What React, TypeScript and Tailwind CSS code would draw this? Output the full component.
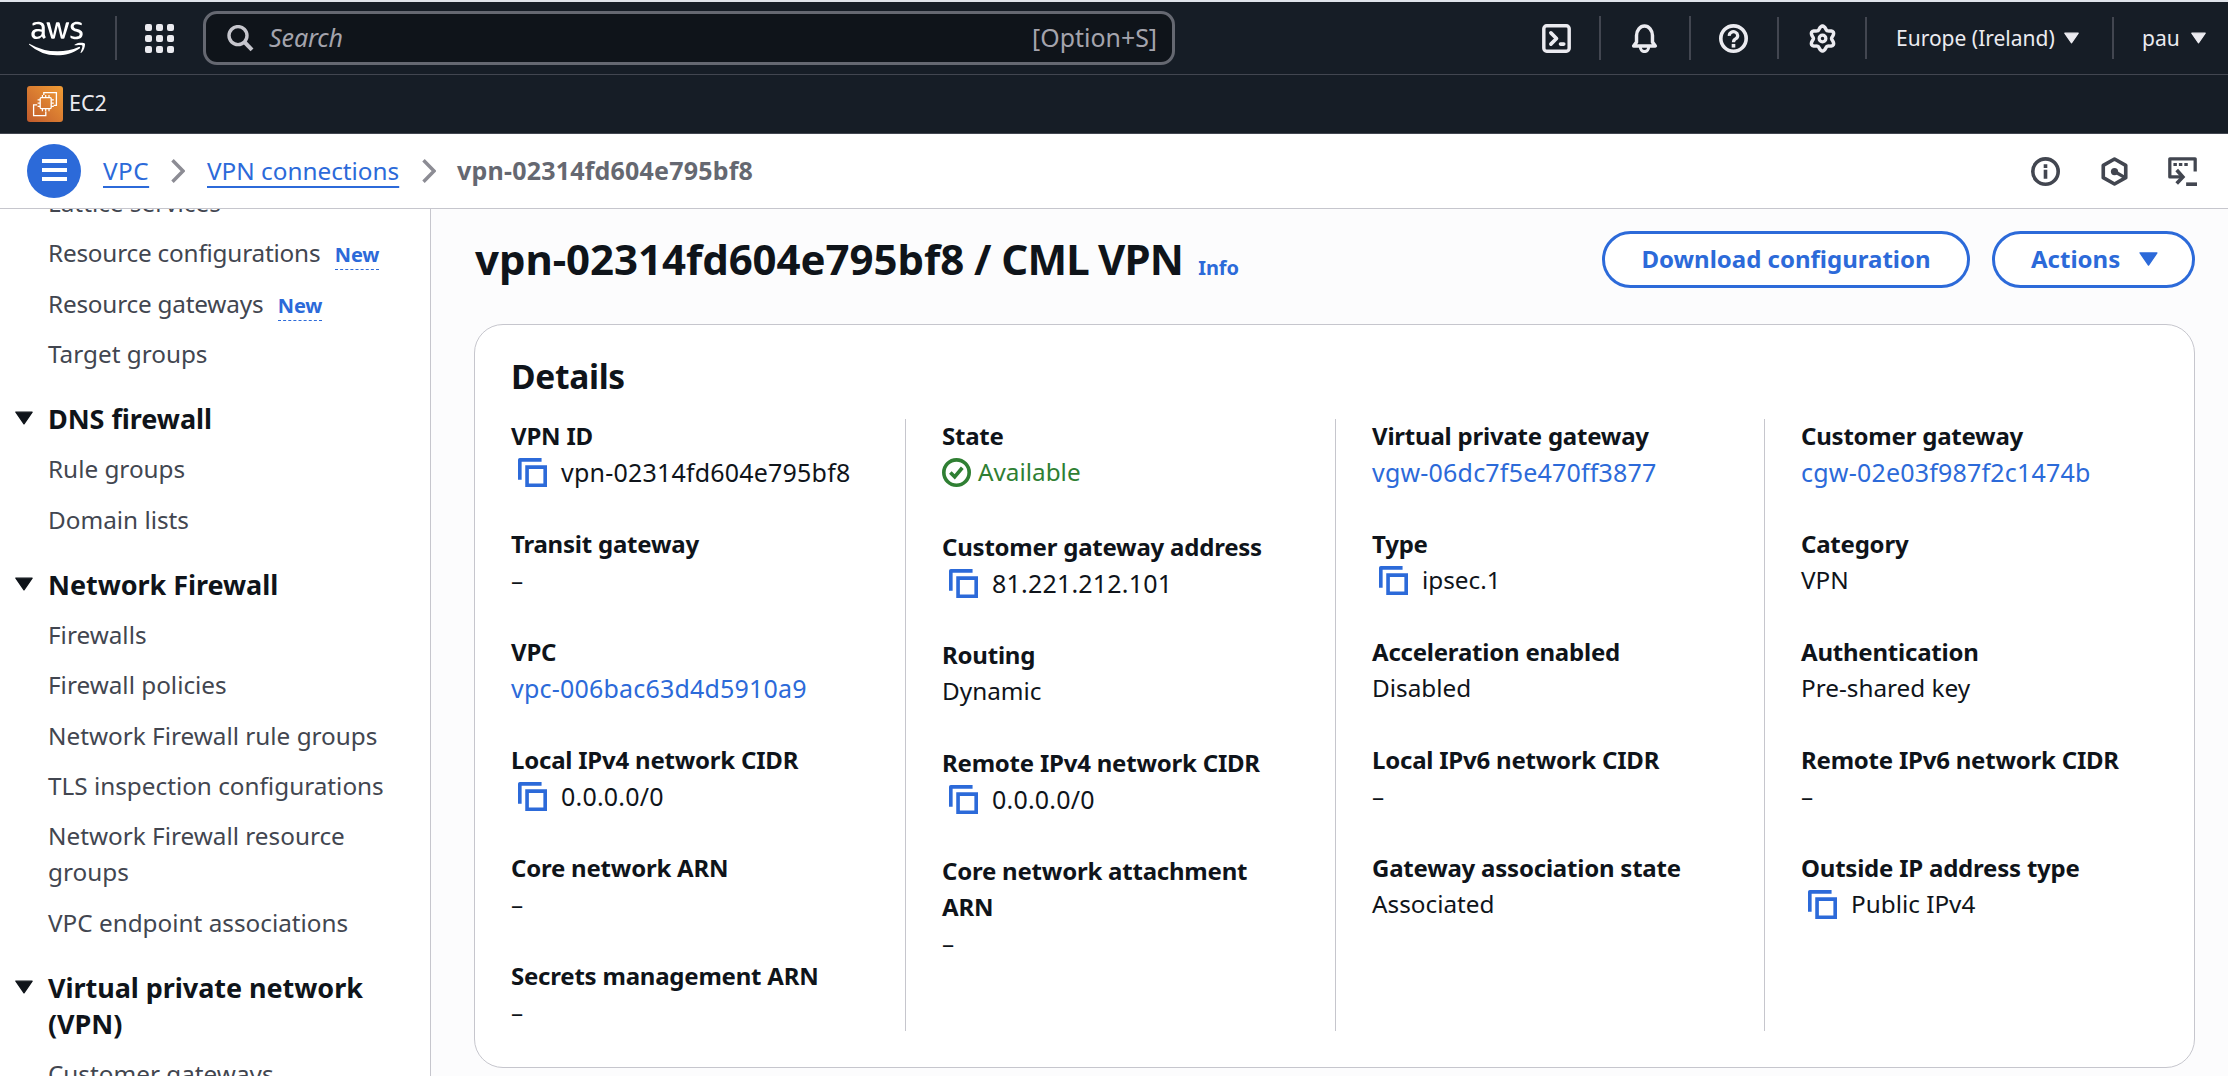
import React from "react";
import { FaAws } from "react-icons/fa";

const VR = ({ className = "" }: { className?: string }) => (
  <div className={`w-[2px] shrink-0 bg-[#424650] ${className}`} />
);

function Caret({ className = "" }: { className?: string }) {
  return (
    <svg viewBox="0 0 16 12" className={`shrink-0 ${className}`} fill="currentColor" stroke="currentColor" strokeWidth="1.2" strokeLinejoin="round">
      <path d="M0.8 0.8H15.2L8 11.2Z" />
    </svg>
  );
}

function Icon({ children, className = "" }: { children: React.ReactNode; className?: string }) {
  return (
    <svg viewBox="0 0 16 16" fill="none" stroke="currentColor" strokeWidth="2" className={`size-[29px] shrink-0 ${className}`}>
      {children}
    </svg>
  );
}

const CopyIcon = () => (
  <Icon className="text-[#2c6ad9]">
    <path d="M15 5H5v10h10V5Z" />
    <path d="M13 1H1v11" strokeLinejoin="round" />
  </Icon>
);

const gearPath =
  Array.from({ length: 72 }, (_, i) => {
    const a = (i / 72) * Math.PI * 2;
    const r = 5.95 + 0.95 * Math.cos(6 * a);
    return `${i ? "L" : "M"}${(8 + r * Math.sin(a)).toFixed(2)} ${(8 - r * Math.cos(a)).toFixed(2)}`;
  }).join("") + "Z";

const Chevron = ({ className = "" }: { className?: string }) => (
  <svg viewBox="0 0 14 24" className={`h-6 w-3.5 shrink-0 text-[#8c8c94] ${className}`} fill="none" stroke="currentColor" strokeWidth="3.4">
    <path d="M1.5 1.2L12 12L1.5 22.8" />
  </svg>
);

function Header() {
  return (
    <header className="flex h-[73px] items-center border-b border-[#424650] bg-[#161d26] text-[#ebebf0]">
      <FaAws className="ml-[29px] h-[45px] w-[56px] shrink-0 text-white" />
      <VR className="ml-[30px] h-11" />
      <div className="ml-7 grid w-[29px] shrink-0 grid-cols-3 gap-x-1 gap-y-1">
        {Array.from({ length: 9 }, (_, i) => (
          <div key={i} className="h-[7px] w-[7px] rounded-[2px] bg-[#ebebf0]" />
        ))}
      </div>
      <div className="ml-[29px] flex h-[54px] w-[972px] shrink-0 items-center rounded-[14px] border-[3px] border-[#656871] bg-[#0f141a]">
        <svg viewBox="0 0 27 27" className="ml-[21px] size-[27px] shrink-0 text-[#c6c6cd]" fill="none" stroke="currentColor">
          <circle cx="11" cy="10.6" r="9" strokeWidth="3.4" />
          <path d="M17.4 17L25 24.8" strokeWidth="4" />
        </svg>
        <span className="ml-[15px] text-[25px] tracking-[-0.1px] text-[#a4a4ad] italic">Search</span>
        <span className="mr-[15px] ml-auto text-[24.9px] text-[#a4a4ad]">[Option+S]</span>
      </div>
      <Icon className="ml-[367px]">
        <rect x="1" y="1" width="14" height="14" rx="1.6" strokeWidth="1.9" />
        <path d="M4.9 4.9L8 8L4.9 11.1" strokeLinecap="round" strokeLinejoin="round" />
        <path d="M10.2 11.1H12" strokeLinecap="round" />
      </Icon>
      <VR className="ml-7 h-11" />
      <Icon className="ml-[29px]">
        <path d="M3.6 10V6.4a4.4 5.3 0 0 1 8.8 0V10L14 12.1H2Z" strokeLinejoin="round" strokeWidth="1.9" />
        <path d="M5.7 12.6a2.3 2.6 0 0 0 4.6 0" strokeWidth="1.7" />
      </Icon>
      <VR className="ml-[30px] h-11" />
      <Icon className="ml-7">
        <circle cx="8" cy="8" r="7" />
        <path d="M5.7 6.5a2.3 2.1 0 1 1 3.6 1.6C8.4 8.6 8 8.9 8 10" strokeWidth="1.8" />
        <path d="M8 11v2" />
      </Icon>
      <VR className="ml-[29px] h-[42px]" />
      <Icon className="ml-[29px]">
        <path d={gearPath} strokeWidth="1.9" strokeLinejoin="round" />
        <circle cx="8" cy="8" r="1.85" strokeWidth="1.8" />
      </Icon>
      <VR className="ml-7 h-[42px]" />
      <span className="ml-[29px] w-[158px] shrink-0 whitespace-nowrap pt-px text-[21px]">Europe (Ireland)</span>
      <Caret className="ml-[10px] h-3 w-[15px]" />
      <VR className="ml-[33px] h-[42px]" />
      <span className="ml-7 w-[37px] shrink-0 pt-px text-[21px]">pau</span>
      <Caret className="ml-3 h-3 w-[15px]" />
    </header>
  );
}

function ServiceBar() {
  return (
    <div className="flex h-[59px] items-center border-b border-[#424650] bg-[#161d26] pl-[27px]">
      <div className="size-9 rounded-[3px] bg-linear-to-tr from-[#c05a2c] to-[#f19d35]">
        <svg viewBox="0 0 36 36" className="size-9" fill="none" stroke="white" strokeWidth="1.3">
          <rect x="13.2" y="11.6" width="11" height="11" rx="1" />
          <path d="M15.4 11.4V9M18.7 11.4V9M22 11.4V9M15.4 22.8v2.4M18.7 22.8v2.4M22 22.8v2.4M13 13.8h-2.4M13 17.1h-2.4M13 20.4h-2.4M24.4 13.8h2.4M24.4 17.1h2.4M24.4 20.4h2.4" strokeWidth="1.2" />
          <path d="M16.8 9V6.6H29.4V19.4H26.6" />
          <path d="M10.2 18.8H6.6V29.6H18.8V25.4" />
        </svg>
      </div>
      <span className="ml-[6px] pb-[2px] text-[21.5px] text-[#ebebf0]">EC2</span>
    </div>
  );
}

const crumb = "text-[#2c6ad9] underline decoration-2 underline-offset-[6px] [text-decoration-skip-ink:none]";

function Breadcrumbs() {
  return (
    <div className="flex h-[75px] items-center border-b border-[#c6c6cd] bg-white text-[24.3px] whitespace-nowrap">
      <div className="ml-[27px] flex size-[54px] shrink-0 flex-col items-center justify-center gap-[5px] rounded-full bg-[#2c6ad9] pb-[2px]">
        <div className="h-1 w-[25px] bg-white" />
        <div className="h-1 w-[25px] bg-white" />
        <div className="h-1 w-[25px] bg-white" />
      </div>
      <span className={`ml-[22px] w-[47px] tracking-[0.5px] ${crumb}`}>VPC</span>
      <Chevron className="ml-[21px]" />
      <span className={`ml-[22px] w-[193px] ${crumb}`}>VPN connections</span>
      <Chevron className="ml-[22px]" />
      <span className="ml-[21px] text-[25px] font-bold tracking-[0.2px] text-[#656871]">vpn-02314fd604e795bf8</span>
      <div className="mr-[31px] ml-auto flex items-center gap-[39.5px] text-[#424650]">
        <Icon>
          <circle cx="8" cy="8" r="7" />
          <path d="M8 4v2M8 7v5" />
        </Icon>
        <Icon>
          <path d="M8 1.1L14.2 4.6V11.4L8 14.9L1.8 11.4V4.6Z" strokeLinejoin="round" />
          <circle cx="8" cy="8" r="2" fill="currentColor" stroke="none" />
          <path d="M8 8L13.6 11.2" strokeWidth="1.8" />
        </Icon>
        <Icon>
          <path d="M15 8V1H1V11H8" strokeLinejoin="round" strokeWidth="1.8" />
          <path d="M4.8 7.2L8.2 11L4.8 14.6" />
          <path d="M3 4.1h1.9M6 4.1h1.9M9 4.1h1.9" strokeWidth="1.7" />
          <path d="M10 15H16" />
        </Icon>
      </div>
    </div>
  );
}

function NavItem({ label, isNew }: { label: string; isNew?: boolean }) {
  return (
    <li className="mb-[14.4px] flex items-baseline leading-[36px]">
      <span className={isNew ? "tracking-[-0.2px]" : ""}>{label}</span>
      {isNew && (
        <span className="ml-[14.4px] border-b border-dashed border-[#2c6ad9] pb-[3px] text-[20px] leading-[22px] font-bold tracking-[-0.1px] text-[#2c6ad9]">
          New
        </span>
      )}
    </li>
  );
}

function NavSection({ title, items }: { title: string; items: string[] }) {
  return (
    <div className="pt-[14.4px]">
      <div className="-ml-8 mb-[14.4px] flex text-[27px] leading-[36px] font-bold tracking-[-0.05px] text-[#0f141a]">
        <Caret className="mt-[10px] ml-[-1px] h-[14px] w-[18px]" />
        <span className="ml-[15px]">{title}</span>
      </div>
      <ul>
        {items.map((i) => (
          <NavItem key={i} label={i} />
        ))}
      </ul>
    </div>
  );
}

function Sidebar() {
  return (
    <nav className="w-[431px] shrink-0 overflow-hidden border-r border-[#c6c6cd] bg-white pr-[30px] pl-[48px] text-[24.3px] text-[#424650]">
      <ul className="-mt-[24px]">
        <NavItem label="Lattice services" />
        <NavItem label="Resource configurations" isNew />
        <NavItem label="Resource gateways" isNew />
        <NavItem label="Target groups" />
      </ul>
      <NavSection title="DNS firewall" items={["Rule groups", "Domain lists"]} />
      <NavSection
        title="Network Firewall"
        items={[
          "Firewalls",
          "Firewall policies",
          "Network Firewall rule groups",
          "TLS inspection configurations",
          "Network Firewall resource groups",
          "VPC endpoint associations",
        ]}
      />
      <NavSection title="Virtual private network (VPN)" items={["Customer gateways"]} />
    </nav>
  );
}

type Field = { label: string; value: string; kind?: "copy" | "link" | "status"; wide?: boolean };

const columns: Field[][] = [
  [
    { label: "VPN ID", value: "vpn-02314fd604e795bf8", kind: "copy", wide: true },
    { label: "Transit gateway", value: "–" },
    { label: "VPC", value: "vpc-006bac63d4d5910a9", kind: "link", wide: true },
    { label: "Local IPv4 network CIDR", value: "0.0.0.0/0", kind: "copy", wide: true },
    { label: "Core network ARN", value: "–" },
    { label: "Secrets management ARN", value: "–" },
  ],
  [
    { label: "State", value: "Available", kind: "status" },
    { label: "Customer gateway address", value: "81.221.212.101", kind: "copy", wide: true },
    { label: "Routing", value: "Dynamic" },
    { label: "Remote IPv4 network CIDR", value: "0.0.0.0/0", kind: "copy", wide: true },
    { label: "Core network attachment ARN", value: "–" },
  ],
  [
    { label: "Virtual private gateway", value: "vgw-06dc7f5e470ff3877", kind: "link", wide: true },
    { label: "Type", value: "ipsec.1", kind: "copy" },
    { label: "Acceleration enabled", value: "Disabled" },
    { label: "Local IPv6 network CIDR", value: "–" },
    { label: "Gateway association state", value: "Associated" },
  ],
  [
    { label: "Customer gateway", value: "cgw-02e03f987f2c1474b", kind: "link", wide: true },
    { label: "Category", value: "VPN" },
    { label: "Authentication", value: "Pre-shared key" },
    { label: "Remote IPv6 network CIDR", value: "–" },
    { label: "Outside IP address type", value: "Public IPv4", kind: "copy" },
  ],
];

function FieldView({ f }: { f: Field }) {
  const spacing = f.wide ? "text-[25px] tracking-[0.2px]" : "";
  return (
    <div>
      <div className="text-[24px] font-bold tracking-[-0.22px]">{f.label}</div>
      {f.kind === "copy" && (
        <div className="flex h-9 items-center pl-[7px]">
          <CopyIcon />
          <span className={`ml-[14px] ${spacing}`}>{f.value}</span>
        </div>
      )}
      {f.kind === "link" && <div className={`text-[#2c6ad9] ${spacing}`}>{f.value}</div>}
      {f.kind === "status" && (
        <div className="mb-[3px] flex h-9 items-center text-[#2f7f33]">
          <Icon>
            <circle cx="8" cy="8" r="7" />
            <path d="M4.6 8L7 10.4L11.2 5.4" />
          </Icon>
          <span className="ml-[7px]">{f.value}</span>
        </div>
      )}
      {!f.kind && <div>{f.value}</div>}
    </div>
  );
}

function Main() {
  return (
    <main className="min-w-0 flex-1 bg-[#fcfcfd] pt-[22px] pr-[33px] pl-[43px] text-[#0f141a]">
      <div className="flex h-[57px] items-center">
        <div className="flex items-baseline pb-[2px] whitespace-nowrap">
          <h1 className="pl-px text-[42px] leading-[50px] font-bold tracking-[-0.05px] [word-spacing:-1px]">
            vpn-02314fd604e795bf8 / <span className="tracking-[-0.8px]">CML VPN</span>
          </h1>
          <span className="ml-[15px] text-[20px] font-bold tracking-[-0.1px] text-[#2c6ad9]">Info</span>
        </div>
        <div className="ml-auto flex gap-[22px] text-[24px] font-bold text-[#2c6ad9]">
          <button className="h-[57px] w-[368px] rounded-full border-[3px] border-[#2c6ad9] bg-white pb-[2px]">Download configuration</button>
          <button className="flex h-[57px] w-[203px] items-center rounded-full border-[3px] border-[#2c6ad9] bg-white pb-px pl-9">
            Actions
            <Caret className="ml-[19px] h-[14px] w-[19px]" />
          </button>
        </div>
      </div>
      <section className="mt-[36px] h-[744px] rounded-[29px] border border-[#c6c6cd] bg-white px-9 pt-[28px]">
        <h2 className="text-[33.5px] leading-[46px] font-bold tracking-[-0.3px]">Details</h2>
        <div className="mt-[20px] grid h-[612px] grid-cols-[394px_430px_429px_1fr] text-[24.3px] leading-[36px]">
          {columns.map((col, i) => (
            <div
              key={i}
              className={`flex flex-col gap-9 ${i === 0 ? "" : "border-l border-[#c6c6cd] pl-9"} ${i === 1 ? "pr-9" : ""}`}
            >
              {col.map((f, j) => (
                <div key={f.label} className={j === 0 ? "-mt-px" : ""}>
                  <FieldView f={f} />
                </div>
              ))}
            </div>
          ))}
        </div>
      </section>
    </main>
  );
}

export default function App() {
  return (
    <div className="flex h-[1076px] w-[2228px] flex-col overflow-hidden border-t-2 border-[#dfe3ea] bg-white font-['Noto_Sans',sans-serif]">
      <Header />
      <ServiceBar />
      <Breadcrumbs />
      <div className="flex min-h-0 flex-1">
        <Sidebar />
        <Main />
      </div>
    </div>
  );
}
